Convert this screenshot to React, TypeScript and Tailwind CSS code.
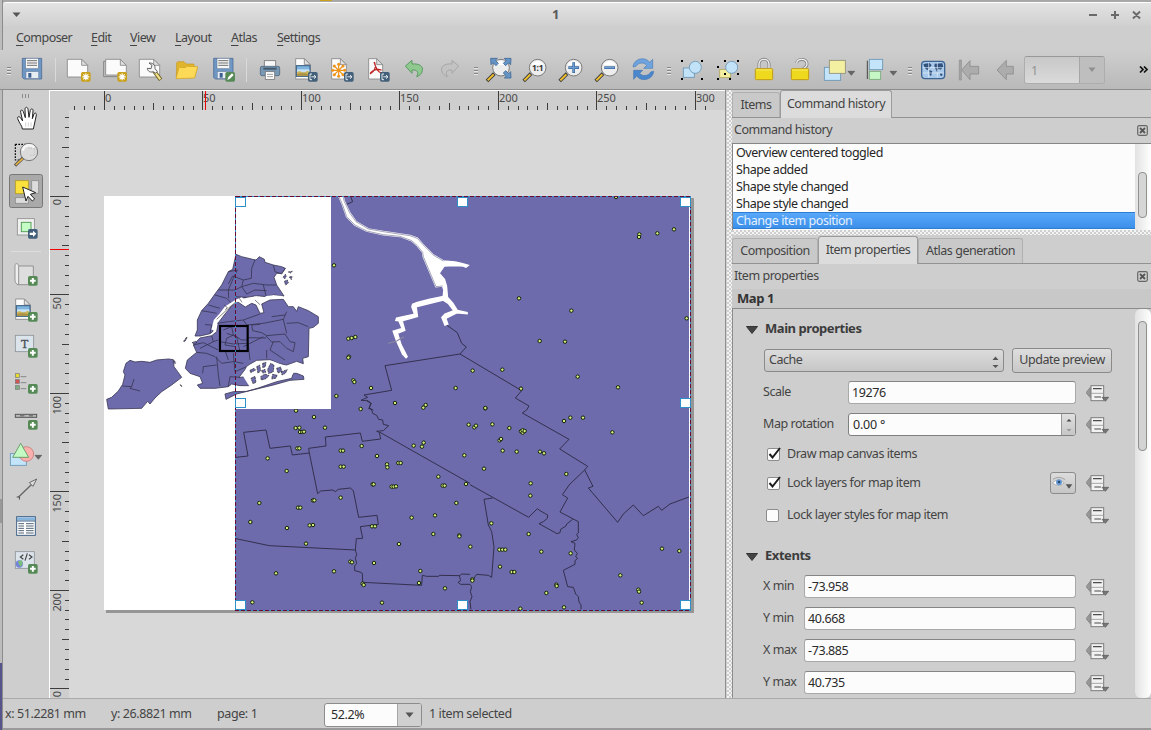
import React from "react";

type Pt = [number, number];

const FONT = "font-['Noto_Sans','Open_Sans',sans-serif]";

/* ---------- icon helpers ---------- */

function Ic({ x, y = 168, w = 36, h = 28, children }: { x: number; y?: number; w?: number; h?: number; children: React.ReactNode }) {
  return (
    <svg className="block shrink-0" width={w} height={h} viewBox={`${x} ${y} ${w * 3} ${h * 3}`}>
      {children}
    </svg>
  );
}

const Badge = ({ x, y, fill, children }: { x: number; y: number; fill: string; children: React.ReactNode }) => (
  <g transform={`translate(${x} ${y})`}>
    <rect width="29" height="29" rx="5" fill={fill} />
    {children}
  </g>
);
const PlusBadge = ({ x, y }: { x: number; y: number }) => (
  <Badge x={x} y={y} fill="#558a57">
    <path d="M14.500 6v17M6 14.500h17" stroke="#fff" strokeWidth="6" />
  </Badge>
);
const StarBadge = ({ x, y }: { x: number; y: number }) => (
  <Badge x={x} y={y} fill="#c9a21a">
    <path d="M14.500 4v21M4 14.500h21M7 7l15 15M22 7l-15 15" stroke="#fff" strokeWidth="3.500" />
  </Badge>
);
const ExportBadge = ({ x, y }: { x: number; y: number }) => (
  <Badge x={x} y={y} fill="#42607a">
    <path d="M12 6H6v17h6M10 14.500h13M18 9l6 5.500-6 5.500" stroke="#fff" strokeWidth="2.600" fill="none" />
  </Badge>
);
const Caret = ({ x, y }: { x: number; y: number }) => <path d={`M${x} ${y}h20l-10 12z`} fill="#666" stroke="#444" strokeWidth="1.500" />;

const Floppy = ({ x, y }: { x: number; y: number }) => (
  <g transform={`translate(${x} ${y})`}>
    <path d="M1 1h58v62H6l-5-5z" fill="#6f97c4" stroke="#4f6f98" strokeWidth="2.500" />
    <rect x="11" y="1" width="38" height="31" fill="#f6f6f6" stroke="#5b6f8a" strokeWidth="1.500" />
    <path d="M15 8h30M15 15h30M15 22h30" stroke="#555" strokeWidth="2.500" />
    <rect x="12" y="41" width="38" height="20" fill="#e8edf4" stroke="#6a7d96" strokeWidth="1.500" />
    <rect x="19" y="45" width="9" height="14" fill="#3b5f8e" />
  </g>
);

const Page = ({ x, y, w = 62, h = 54 }: { x: number; y: number; w?: number; h?: number }) => (
  <g transform={`translate(${x} ${y})`}>
    <path d={`M1 1H${w - 18}L${w} 19V${h}H1Z`} fill="#fbfbfb" stroke="#858585" strokeWidth="2.500" />
    <path d={`M${w - 18} 1V19H${w}Z`} fill="#dedede" stroke="#858585" strokeWidth="2.500" />
  </g>
);

const Picture = ({ x, y }: { x: number; y: number }) => (
  <g transform={`translate(${x} ${y})`}>
    <rect width="41" height="32" fill="#7db3df" stroke="#34577c" strokeWidth="3" />
    <path d="M2 11h37v9H2z" fill="#c9e3f2" />
    <path d="M2 19c10-7 16 3 22 1s8-7 15-2v12H2z" fill="#cdb25a" />
    <path d="M2 26c12-6 22-3 37 0v4H2z" fill="#ab9142" />
  </g>
);

const Lens = ({ x, y, children }: { x: number; y: number; children?: React.ReactNode }) => (
  <g transform={`translate(${x} ${y})`}>
    <path d="M-20 18L-42 40" stroke="#3b3b3b" strokeWidth="11" />
    <path d="M-22 20L-40 38" stroke="#f3c02c" strokeWidth="6" />
    <circle r="25" fill="#ededed" stroke="#7a7a7a" strokeWidth="3" />
    <path d="M-18 -8A20 20 0 0 1 18 -8" fill="#fff" />
    {children}
  </g>
);

const Lock = ({ x, open }: { x: number; open?: boolean }) => (
  <g transform={`translate(${x} 168)`}>
    {open ? (
      <path d="M17 21c2-15 31-15 31 4 0 10-10 9-11 15" fill="none" stroke="#858585" strokeWidth="9" />
    ) : (
      <path d="M12 40V25c0-20 30-20 30 0v15" fill="none" stroke="#858585" strokeWidth="9" />
    )}
    {open ? (
      <path d="M17 21c2-15 31-15 31 4 0 10-10 9-11 15" fill="none" stroke="#f0f0f0" strokeWidth="4" />
    ) : (
      <path d="M12 40V25c0-20 30-20 30 0v15" fill="none" stroke="#f0f0f0" strokeWidth="4" />
    )}
    <rect x="1" y="38" width="52" height="33" rx="3" fill="#efd91f" stroke="#c39b12" strokeWidth="3" />
    <path d="M4 42h46" stroke="#f8ec6b" strokeWidth="3" />
  </g>
);

function Grip({ w, x }: { w: number; x: number }) {
  return (
    <svg className="block shrink-0" width={w} height="28" viewBox={`0 0 ${w} 28`}>
      {[11, 14, 17].map((y) => (
        <g key={y}>
          <rect x={x} y={y} width="4" height="1" fill="#868686" />
          <rect x={x} y={y + 1} width="4" height="1" fill="#e6e6e6" />
        </g>
      ))}
    </svg>
  );
}
const Sep = () => (
  <div className="flex h-[24px] w-[11px] shrink-0 justify-center">
    <div className="w-px bg-[#dadada]" />
  </div>
);

/* ---------- main tool bar ---------- */

function Toolbar() {
  return (
    <div className="flex h-[38px] items-center pl-[3px]">
      <Grip w={11} x={4} />
      <Ic x={42}><Floppy x={66} y={174} /></Ic>
      <Sep />
      <Ic x={183}><Page x={201} y={177} /><StarBadge x={243} y={216} /></Ic>
      <Ic x={291}>
        <path d="M311 184h52v46h-52z" fill="#c4c4c4" stroke="#777" strokeWidth="2.500" />
        <Page x={316} y={177} w={63} h={48} /><StarBadge x={352} y={216} />
      </Ic>
      <Ic x={399}>
        <Page x={417} y={177} />
        <path d="M462 213l20 26" stroke="#6a5c20" strokeWidth="12" />
        <path d="M463 214l18 24" stroke="#f0e28c" strokeWidth="7" />
        <path d="M447 189l9 7-3 10-11-1c1 10 10 13 17 10l8 5 5-6-7-8c1-10-6-18-18-17z" fill="#f5f5f5" stroke="#444" strokeWidth="2.500" />
      </Ic>
      <Ic x={507}>
        <path d="M529 234l1-46 4-3h18l6 7h24v10l10 1-9 30z" fill="#e0b52e" stroke="#c8981c" strokeWidth="2" />
        <path d="M528 236l9-34 18 1 5-4 33 1-9 34z" fill="#fcd957" stroke="#d0a224" strokeWidth="2" />
      </Ic>
      <Ic x={615}>
        <Floppy x={640} y={174} />
        <Badge x={676} y={216} fill="#558a57"><path d="M6 24l3-9 11-11 5 5-11 11z" fill="#fff" /></Badge>
      </Ic>
      <Sep />
      <Ic x={756}>
        <rect x="793" y="182" width="34" height="25" fill="#f8f8f8" stroke="#777" strokeWidth="2.500" />
        <rect x="781" y="199" width="58" height="28" rx="5" fill="#7898b3" stroke="#50697f" strokeWidth="2.500" />
        <path d="M790 206h40" stroke="#45596c" strokeWidth="6" />
        <rect x="796" y="215" width="28" height="23" fill="#fff" stroke="#777" strokeWidth="2.500" />
        <path d="M801 223h18M801 230h18" stroke="#888" strokeWidth="2.500" />
      </Ic>
      <Ic x={864}><Page x={886} y={175} w={45} h={62} /><Picture x={889} y={197} /><ExportBadge x={924} y={216} /></Ic>
      <Ic x={972}>
        <Page x={994} y={175} w={45} h={62} />
        <path d="M1016 192v38M998 211h36M1003 198l26 26M1029 198l-26 26" stroke="#ee9418" strokeWidth="3.500" />
        {[[1016, 193], [1016, 229], [998, 211], [1034, 211], [1003, 198], [1029, 224], [1029, 198], [1003, 224]].map(([a, b]) => (
          <circle key={`${a}-${b}`} cx={a} cy={b} r="4.500" fill="#ee9418" />
        ))}
        <ExportBadge x={1032} y={216} />
      </Ic>
      <Ic x={1080}>
        <Page x={1105} y={175} w={43} h={62} />
        <path d="M1122 186c8 24 12 29 24 34M1124 187c6 16-3 28-14 35M1111 219c10-11 25-13 34-8" stroke="#bd2525" strokeWidth="3.500" fill="none" />
        <ExportBadge x={1140} y={216} />
      </Ic>
      <Ic x={36} y={18}>
        <path d="M64 48l20-17v11c22-2 34 7 31 20-2 10-8 15-17 18 7-13 3-21-14-20v10z" fill="#8fc98f" stroke="#5a9a61" strokeWidth="3" />
      </Ic>
      <Ic x={144} y={18}>
        <path d="M224 48l-20-17v11c-22-2-34 7-31 20 2 10 8 15 17 18-7-13-3-21 14-20v10z" fill="#c3c3c3" stroke="#a6a6a6" strokeWidth="3" />
      </Ic>
      <Grip w={14} x={6} />
      <Ic x={294} y={18}>
        <Lens x={351} y={53} />
        {["M320 25h20l-6 6 9 9-7 7-9-9-6 6z", "M381 25h-20l6 6-9 9 7 7 9-9 6 6z", "M381 84h-20l6-6-9-9 7-7 9 9 6-6z"].map((d) => (
          <path key={d} d={d} fill="#6594c6" stroke="#416a96" strokeWidth="2.500" />
        ))}
      </Ic>
      <Ic x={402} y={18}>
        <Lens x={461} y={53}>
          <text x="0" y="9" textAnchor="middle" className="font-['Open_Sans',sans-serif] font-bold" fontSize="25" fill="#333">1:1</text>
        </Lens>
      </Ic>
      <Ic x={510} y={18}><Lens x={569} y={53}><path d="M0-16V16M-16 0H16" stroke="#3a6ba2" strokeWidth="8" /><path d="M0-14V14M-14 0H14" stroke="#6d9bd0" strokeWidth="4" /></Lens></Ic>
      <Ic x={618} y={18}><Lens x={677} y={53}><path d="M-16 0H16" stroke="#3a6ba2" strokeWidth="8" /><path d="M-14 0H14" stroke="#6d9bd0" strokeWidth="4" /></Lens></Ic>
      <Ic x={726} y={18}>
        <path d="M747 51c2-26 37-33 50-14l9-9v27h-27l9-9c-9-11-26-8-32 3z" fill="#6fa3dd" stroke="#4a7db8" strokeWidth="2" />
        <path d="M809 64c-2 26-37 33-51 14l-9 10V61h27l-9 9c9 11 27 8 33-4z" fill="#4b87cc" stroke="#4277b2" strokeWidth="2" />
      </Ic>
      <Grip w={12} x={5} />
      <Ic x={870} y={18}>
        <rect x="898" y="54" width="33" height="28" fill="#c2e2f8" stroke="#6894b4" strokeWidth="2.500" />
        <circle cx="934" cy="52" r="18" fill="#c2e2f8" stroke="#6894b4" strokeWidth="2.500" />
        {[[891, 30], [951, 30], [891, 84], [951, 84]].map(([a, b]) => <rect key={`${a}-${b}`} x={a} y={b} width="6" height="6" />)}
      </Ic>
      <Ic x={978} y={18}>
        <rect x="1007" y="58" width="33" height="25" fill="#f3eda2" stroke="#ada65d" strokeWidth="2.500" />
        <circle cx="1043" cy="52" r="18" fill="#c2e2f8" stroke="#6894b4" strokeWidth="2.500" />
        {[[1020, 30], [1059, 30], [999, 48], [1059, 69], [1020, 69], [999, 84], [1035, 84]].map(([a, b]) => <rect key={`${a}-${b}`} x={a} y={b} width="6" height="6" />)}
      </Ic>
      <Ic x={-63}><Lock x={-36} /></Ic>
      <Ic x={45}><Lock x={72} open /></Ic>
      <Ic x={153} w={42}>
        <rect x="172" y="202" width="49" height="39" fill="#c4e4fa" stroke="#6894b4" strokeWidth="2.500" />
        <rect x="187" y="181" width="48" height="39" fill="#f3f0a2" stroke="#8d8d78" strokeWidth="2.500" />
        <Caret x={243} y={214} />
      </Ic>
      <Ic x={279} w={42}>
        <path d="M301 182v55" stroke="#444" strokeWidth="3" />
        <rect x="307" y="178" width="40" height="31" fill="#c4e4fa" stroke="#6894b4" strokeWidth="2.500" />
        <rect x="307" y="214" width="34" height="24" fill="#c6f8c5" stroke="#7aa67a" strokeWidth="2.500" />
        <Caret x={369} y={214} />
      </Ic>
      <Grip w={15} x={6} />
      <Ic x={450} w={34}>
        <rect x="464" y="184" width="69" height="52" rx="10" fill="#a9c9ea" stroke="#3e6492" strokeWidth="4" />
        <path d="M469 192l19-3 6 7-9 10-4 5-8-8zM487 210l9 4-4 15-5-6zM503 191l23-1 3 10-8 9-7-3-3 13-5-11-4-9zM520 219l7 2-2 7-6-2z" fill="#31527d" />
        <path d="M485 187v46M511 187v46M467 203h63M467 219h63" stroke="#e4effa" strokeWidth="2" />
      </Ic>
      <Ic x={552}>
        <path d="M577 180h6v60h-6z" fill="#a6a6a6" stroke="#8d8d8d" strokeWidth="2" />
        <path d="M584 210l25-28v17h26v23h-26v17z" fill="#acacac" stroke="#8d8d8d" strokeWidth="2.500" />
      </Ic>
      <Ic x={660}><path d="M690 210l28-29v18h21v23h-21v17z" fill="#acacac" stroke="#8d8d8d" strokeWidth="2.500" /></Ic>
      <div className="ml-px flex h-[28px] w-[81px] overflow-hidden rounded-[3px] border border-[#adadad] border-t-[#989898]">
        <div className="w-[54px] bg-gradient-to-b from-[#c8c8c8] to-[#dadada] pl-[6px] leading-[27px] text-[#929292]">1</div>
        <div className="flex flex-1 items-center justify-center border-l border-[#a6a6a6] bg-[#bebebe]">
          <svg width="8" height="6" viewBox="0 0 8 6"><path d="M.5.500h7L4 5z" fill="#8f8f8f" /></svg>
        </div>
      </div>
      <svg className="ml-[34px] block" width="10" height="8" viewBox="0 0 10 8"><path d="M1 .500l3 3-3 3M5 .500l3 3-3 3" fill="none" stroke="#111" strokeWidth="1.700" /></svg>
    </div>
  );
}

/* ---------- side tool bar ---------- */

const S = ({ y, h = 36, children }: { y: number; h?: number; children: React.ReactNode }) => <Ic x={9} y={y} w={46} h={h}>{children}</Ic>;

function SideTools() {
  return (
    <div className="flex w-[46px] shrink-0 flex-col">
      <S y={15} h={11}>{[66, 75, 84].map((x) => <rect key={x} x={x} y="27" width="3" height="12" fill="#8b8b8b" />)}</S>
      <S y={48}>
        <path d="M67 132c0-9-8-15-14-31-2-7 5-8 9-2l6 9-6-26c-2-8 5-9 8-2l6 18-1-25c0-8 8-8 9 0l3 24 4-21c2-7 9-5 8 2l-2 23 5-14c3-5 8-3 7 3l-5 24-4 18z" fill="#fff" stroke="#222" strokeWidth="3" />
        <path d="M77 112v13M85 112v13M93 112v13" stroke="#bbb" strokeWidth="2" />
      </S>
      <S y={156}>
        <path d="M46 178h45M46 178v47h20" fill="none" stroke="#000" strokeWidth="3.500" strokeDasharray="5 4" />
        <path d="M70 218L45 242" stroke="#555" strokeWidth="10" /><path d="M68 221L47 240" stroke="#e9b33c" strokeWidth="5" />
        <circle cx="87" cy="201" r="26" fill="#dcdcdc" fillOpacity=".93" stroke="#777" strokeWidth="3" />
        <path d="M68 197a20 20 0 0 1 35-9" stroke="#f7f7f7" strokeWidth="8" fill="none" />
        <path d="M86 190h18v21h-16" stroke="#aaa" strokeWidth="2" strokeDasharray="3 4" fill="none" />
      </S>
      <S y={264}>
        <rect x="28.500" y="268.500" width="99" height="99" rx="6" fill="#a9a9a9" stroke="#777" strokeWidth="3" />
        <rect x="46" y="287" width="39" height="39" fill="#fbe13d" stroke="#b29a27" strokeWidth="2.500" />
        <rect x="95" y="287" width="21" height="38" fill="#dcdcdc" stroke="#8d8d8d" strokeWidth="2.500" />
        <rect x="46" y="338" width="39" height="17" fill="#dcdcdc" stroke="#8d8d8d" strokeWidth="2.500" />
        <path d="M68 306l39 17-16 5 13 14-7 6-13-14-6 14z" fill="#fff" stroke="#222" strokeWidth="3" />
      </S>
      <S y={372} h={37}>
        <rect x="52" y="401" width="51" height="49" fill="#f1f1f1" stroke="#8d8d8d" strokeWidth="2.500" />
        <rect x="64" y="412" width="29" height="28" fill="#c5fbc4" stroke="#58a058" strokeWidth="3" />
        <Badge x={84} y={432} fill="#42607a"><path d="M5 11h10V5l10 9.500L15 24v-6H5z" fill="#fff" /></Badge>
      </S>
      <div className="flex h-[10px] items-center justify-center"><div className="h-px w-[30px] bg-[#dedede]" /></div>
      <S y={513}>
        <path d="M54 543h46v56H54z" fill="#dedede" stroke="#858585" strokeWidth="2.500" />
        <path d="M45 539c5-6 11-2 11 5v55c-7 0-11-7-11-14z" fill="#efefef" stroke="#858585" strokeWidth="2.500" />
        <PlusBadge x={84} y={573} />
      </S>
      <S y={621}><Page x={46} y={641} w={45} h={62} /><Picture x={49} y={662} /><PlusBadge x={84} y={681} /></S>
      <S y={729} h={37}>
        <rect x="46" y="751" width="55" height="49" fill="#dbe3eb" stroke="#8d9299" strokeWidth="2.500" />
        <text x="74" y="788" textAnchor="middle" fontSize="36" className="font-['Liberation_Serif',serif]" fill="#4a5058" stroke="#4a5058">T</text>
        <PlusBadge x={84} y={789} />
      </S>
      <S y={840}>
        {[["#e6da2e", 866], ["#d35454", 884], ["#7fae80", 902]].map(([c, y]) => (
          <g key={y}><rect x="46" y={y} width="12" height="11" fill={c as string} stroke="#777" strokeWidth="2" /><path d={`M62 ${Number(y) + 9}h17`} stroke="#888" strokeWidth="3" /></g>
        ))}
        <PlusBadge x={84} y={897} />
      </S>
      <S y={33}>
        <rect x="46" y="73" width="64" height="9" fill="#b9b9b9" stroke="#555" strokeWidth="3" />
        <path d="M60 77h13M87 77h12" stroke="#777" strokeWidth="5" />
        <PlusBadge x={84} y={90} />
      </S>
      <S y={141}>
        <rect x="31" y="191" width="48" height="35" fill="#c4e4fa" stroke="#6894b4" strokeWidth="2.500" />
        <circle cx="79" cy="192" r="22" fill="#fbb0ae" stroke="#c57b7a" strokeWidth="2.500" />
        <path d="M62 160l24 42H38z" fill="#c4fbc4" stroke="#589058" strokeWidth="2.500" />
        <Caret x={105} y={196} />
      </S>
      <S y={249} h={35}>
        <path d="M55 322l42-41" stroke="#666" strokeWidth="4" />
        <path d="M110 267l-22 11 11 11z" fill="#ddd" stroke="#555" strokeWidth="2.500" />
        <path d="M50 321h9l-1 8" stroke="#555" strokeWidth="3" fill="none" />
      </S>
      <S y={354}>
        <rect x="50" y="380" width="56" height="56" fill="#fff" stroke="#3c6084" strokeWidth="3" />
        <path d="M51 386.500h54" stroke="#86b4dc" strokeWidth="9" /><path d="M51 393h54" stroke="#3c6084" strokeWidth="3" />
        {[401, 408, 415, 422, 429].map((y) => <path key={y} d={`M55 ${y}h17M78 ${y}h23`} stroke="#46586b" strokeWidth="2.800" />)}
      </S>
      <S y={462}>
        <rect x="46" y="485" width="57" height="50" fill="#dbe3eb" stroke="#8d9299" strokeWidth="2.500" />
        <circle cx="58" cy="522" r="11" fill="#7585d6" /><path d="M54 514l12-3 2 10-6 10-5-8z" fill="#79bf7c" />
        <path d="M70 494l-9 7 9 7M87 494l9 7-9 7M82 490l-7 22" fill="none" stroke="#444" strokeWidth="3.500" />
        <PlusBadge x={84} y={522} />
      </S>
    </div>
  );
}

/* ---------- rulers ---------- */

const MM = 1.9695;
const steps = (from: number, to: number) => Array.from({ length: (to - from) / 5 + 1 }, (_, i) => from + i * 5);

function TopRuler() {
  return (
    <svg className="block tracking-[-0.1px]" width="675" height="19" viewBox="50 91 675 19" shapeRendering="crispEdges">
      {steps(-15, 305).map((v) => {
        const x = Math.round(104 + v * MM);
        const major = v % 50 === 0;
        const top = major ? 91 : v % 25 === 0 ? 103 : 106;
        return (
          <g key={v}>
            <rect x={x} y={top} width="1" height={110 - top} fill="#3c3c3c" />
            {major && <text x={x + 1} y="102" fontSize="11" fill="#4a4a4a">{v}</text>}
          </g>
        );
      })}
      <rect x="205" y="91" width="1" height="19" fill="#f00000" />
    </svg>
  );
}
function LeftRuler() {
  return (
    <svg className="block shrink-0 tracking-[-0.1px]" width="19" height="588" viewBox="50 110 19 588" shapeRendering="crispEdges">
      {steps(-40, 250).map((v) => {
        const y = Math.round(196 + v * MM);
        const major = v % 50 === 0;
        const left = major ? 50 : v % 25 === 0 ? 62 : 65;
        return (
          <g key={v}>
            <rect x={left} y={y} width={69 - left} height="1" fill="#3c3c3c" />
            {major && <text transform={`translate(61 ${y + 3}) rotate(-90)`} textAnchor="end" fontSize="11" fill="#4a4a4a">{v}</text>}
          </g>
        );
      })}
      <rect x="50" y="249" width="19" height="1" fill="#f00000" />
    </svg>
  );
}

/* ---------- map ---------- */

const northPts: Pt[] = [[12,226],[858,21],[928,133],[927,141],[982,130],[1032,118],[567,325],[724,362],[1070,385],[629,453],[705,455],[55,446],[65,444],[76,441],[57,500],[55,503],[70,571],[73,576],[123,594],[19,618],[195,639],[280,653],[287,645],[428,542],[517,539],[377,594],[573,596],[743,560],[864,592],[92,657],[466,655]];
const westPts: Pt[] = [[198,32],[252,51],[285,83],[197,84],[208,83],[210,96],[217,96],[222,95],[202,145],[208,145],[113,175],[170,213],[88,309],[61,366],[171,384],[204,323],[211,323],[249,301],[253,301],[239,376],[249,375],[228,431],[138,520],[312,514],[67,607],[332,152],[339,152],[332,200],[341,200],[332,293],[395,138],[441,168],[471,193],[472,202],[505,189],[512,189],[428,253],[431,253],[485,260],[491,260],[498,259],[551,137],[576,140],[581,128],[625,230],[638,257],[644,257],[703,166],[679,309],[545,353],[615,346],[610,402],[688,406],[688,409],[426,379],[435,379],[507,432],[432,489],[361,485],[366,487],[398,551],[401,555],[571,513],[567,549],[645,565],[456,608]];
const eastPts: Pt[] = [[76,24],[26,74],[43,82],[48,77],[97,73],[148,84],[183,94],[188,98],[188,91],[194,93],[119,121],[123,117],[128,152],[170,155],[240,155],[252,160],[312,63],[331,53],[369,53],[457,97],[72,206],[319,222],[212,250],[211,287],[18,252],[94,370],[206,402],[31,440],[118,449],[127,449],[136,449],[244,455],[332,460],[120,500],[155,516],[163,516],[37,538],[37,542],[289,554],[290,558],[259,579],[312,622],[181,626],[606,446],[658,453],[481,526],[535,569],[537,575],[545,608]];

const Dots = ({ pts }: { pts: Pt[] }) => (
  <>
    {pts.map(([x, y], i) => (
      <circle key={i} cx={x} cy={y} r="5.200" fill="#cdf07c" stroke="#16200c" strokeWidth="3" />
    ))}
  </>
);

const landmass = [
  "M20 628L35 622L55 603L68 583L75 555L70 545L78 520L90 511L105 516L125 514L150 517L170 510L205 507L220 509L222 530L233 545L245 562L215 585L185 605L165 624L150 642L143 634L125 655L25 657Z",
  "M408 193L425 200L458 208L468 210L478 200L493 208L495 217L520 225L545 230L556 235L545 250L530 250L522 262L530 285L540 300L552 318L520 315L500 320L470 317L440 322L412 328L408 334L385 350L360 375L345 392L338 425L330 431L300 438L285 438L292 420L292 390L305 362L325 340L345 312L365 285L385 245L398 238Z",
  "M412 335L436 351L455 340L468 345L480 370L492 368L485 342L510 330L550 328L565 350L580 350L590 364L595 350L625 362L655 380L655 400L640 412L627 415L625 500L608 505L610 521L590 514L560 525L535 520L510 509L470 511L445 525L430 545L417 562L445 560L447 587L420 587L395 582L385 590L345 595L300 595L292 585L308 580L300 560L270 550L256 535L262 510L290 487L280 465L300 444L335 437L350 425L355 398L375 372L400 342Z",
  "M375 612L400 605L440 604L475 594L530 575L575 565L580 550L590 550L610 558L612 568L570 571L520 585L450 602L410 612L378 628Z",
];
const bay = "M430 560L440 530L475 517L515 512L540 522L560 530L572 530L580 552L555 562L520 574L475 586L447 587Z";
const islets = ["M450 541l12-6 5 5-15 8z", "M470 530l9-5 3 17-8 8z", "M488 520l10-3-2 13-8 3z", "M503 538l9-18 10 5-2 20-14 6z", "M530 535l12-4 3 13-11 5z", "M453 565l12-6 3 18-9 4z", "M482 560l13-8 12 5-9 9-14 4z", "M518 553l14 3-5 9-12 2z", "M544 545l18-6-6 11-10 5z", "M485 542l10-4 2 9-9 2z", "M549 262l7-9 3 5-4 8z", "M565 246l12-2-5 5z", "M553 274l9-4 3 9-8 6z", "M568 261l8-2-2 10z", "M276 458l10-4 5 3-8 5z", "M251 454l9-13 1 3-7 11z", "M222 511l5 7-2 3-5-6z", "M240 584l5 3v3z"];
const districts = [
  "M465 210L455 235L454 265L430 270L398 258L385 282",
  "M520 225L525 245L545 252L556 235M430 270L425 290L460 280L500 285L528 285M425 290L440 312L465 300L500 302M490 285L498 318",
  "M385 245L412 240L400 265L385 300L386 325M355 300L405 300L425 290M345 315L380 325L395 340M325 345L360 355M305 362L350 370M315 404L335 405L330 430M405 320L440 322",
  "M352 400L385 395L430 390L480 372M430 390L440 405L490 400L550 388L560 365M480 403L455 405L458 422L485 428L500 437L555 432L570 455L585 458L580 485L560 475L540 455L515 456L498 438",
  "M550 388L560 430M560 400L595 398L625 410M440 443L498 444M430 470L490 440M520 455L510 480L555 510M515 380L555 375",
  "M290 487L320 490L345 500L365 520L400 515L430 520M280 465L310 458L355 480M335 437L340 455L355 450M360 455L400 462L440 460M380 430L410 440L420 485M350 500L355 555L360 588M308 550L310 530L350 525M385 590L390 560L420 562M400 490L405 545L440 530M340 455L300 475M375 480L385 510M445 465L450 510M500 480L500 505",
  "M68 588L95 590L90 595L120 603M95 590L102 567",
  "M370 420L395 410L400 435L380 445L375 465L405 470M400 435L425 450L440 450",
];
const boundaries = [
  ["330 190", "M350 405L382 428L395 460L409 471L390 492L165 527L185 601L102 615L113 622L93 631L110 632L122 640L118 655L130 660M390 492L575 602L556 624L597 648L590 660M50 43L68 35L62 20"],
  ["230 400", "M18 172L54 168L41 97L108 90L120 145L181 138L187 165L238 159L236 145L288 138L286 111L391 99L397 124L452 117L448 97L440 94L460 92L476 77L460 73L458 60L446 58L440 46L428 40L424 27L416 26L424 10L410 0M450 97L720 250M238 159L263 281L272 273L308 270L316 275L325 268L361 264L370 272L386 352L441 346L445 373L391 380L398 415L379 416L376 450L118 437L18 416M376 450L380 464L376 475L380 490L374 498L374 512L390 516L397 520L398 547L575 556L577 526L590 529L625 529L630 526L690 527L694 522L720 523M688 527L692 542L684 547L692 553L720 553"],
  ["460 400", "M200 30L187 39L327 118L299 147L383 199L374 210L330 252L307 284L323 294L300 336L355 365L355 398L350 404L355 413L350 420L333 425L345 430L343 450L352 460L347 470L353 475L345 482L345 493L310 511L323 560L340 562L347 582L355 590L357 606L363 615L363 628M374 210L399 259L385 264L473 367L490 342L520 315L550 347L595 319L605 331L630 312L687 291M30 254L206 352L232 326L240 332L263 345L262 355L250 365L237 371L291 401L300 398L302 388L318 378L320 372L338 358M98 294L72 298L76 320L85 375L95 395L102 440L95 532L85 526L50 523L45 530L38 545M30 553L35 560L31 575L36 590L30 605L33 628"],
];

function MapCanvas() {
  return (
    <svg className="block bg-[#d8d8d8]" width="656" height="588" viewBox="69 110 656 588">
      <clipPath id="frame"><rect x="235" y="196" width="455" height="414" /></clipPath>
      <rect x="106" y="198" width="588" height="415" fill="#969696" />
      <rect x="104" y="196" width="587" height="414" fill="#fff" />
      <rect x="235" y="196" width="454" height="414" fill="#6d6bab" />
      <g clipPath="url(#frame)">
        <g fill="none" stroke="#2e2b47" strokeWidth="2.800" strokeLinejoin="round">
          {boundaries.map(([at, d]) => <path key={at} transform={`translate(${at}) scale(.33333)`} d={d} />)}
        </g>
        <g transform="translate(330 190) scale(.33333)">
          <path d="M25 15L38 45L50 80L75 105L110 123L160 134L210 139L245 152L262 167L278 187L280 200L318 290L338 288L342 300L340 320L300 328L262 338L248 343L246 351L254 373L200 385L198 391L207 392L217 416L190 424L200 452L218 492L228 503L231 500L213 465L202 430L224 421L216 392L262 379L258 350L340 330L355 340L372 362L345 373L336 382L345 405L353 402L347 385L380 368L411 371L411 368L382 362L368 340L352 322L349 288L343 268L327 250L342 228L375 226L400 228L408 231L414 226L395 221L375 216L340 213L310 195L280 165L262 145L240 137L160 125L115 117L78 95L60 70L43 35L38 15Z" fill="#fff" stroke="#fff" strokeWidth="5" />
          <path d="M25 15L38 45L50 80L75 105L110 123L160 134L210 139L245 152L262 167L278 187L280 200L318 290L338 288M340 213L310 195L280 165L262 145L240 137L160 125L115 117L78 95L60 70L43 35L38 15" fill="none" stroke="#4a486f" strokeWidth="1.500" />
          <path d="M175 460L200 453L222 440" fill="none" stroke="#8a889f" strokeWidth="3.500" />
          <Dots pts={northPts} />
        </g>
        <g transform="translate(230 400) scale(.33333)"><Dots pts={westPts} /></g>
        <g transform="translate(460 400) scale(.33333)"><Dots pts={eastPts} /></g>
      </g>
      <rect x="104" y="196" width="227" height="213" fill="#fff" />
      <g transform="translate(100 190) scale(.33333)" strokeLinejoin="round">
        <g fill="#6d6bab" stroke="#3c3a58" strokeWidth="2.500">
          {landmass.map((d) => <path key={d} d={d} />)}
        </g>
        <path d={bay} fill="#fff" />
        <g fill="#6d6bab" stroke="#222" strokeWidth="2" strokeDasharray="6 2">{islets.map((d) => <path key={d} d={d} />)}</g>
        <g fill="none" stroke="#35334f" strokeWidth="2.400">{districts.map((d) => <path key={d} d={d} />)}</g>
        <path d="M338 420L345 392L362 373L378 352L410 332L425 326L440 340M462 322L484 335L500 322L520 320L548 322" fill="none" stroke="#fff" strokeWidth="8" />
        <path d="M350 388L385 355L405 338M372 345l10 8-6 6M418 325l8 12M465 330l15 14" fill="none" stroke="#444" strokeWidth="2" />
        <rect x="360" y="408" width="83" height="75" fill="none" stroke="#000" strokeWidth="6.500" strokeLinejoin="miter" />
      </g>
      <g fill="none" shapeRendering="crispEdges">
        <rect x="235.500" y="196.500" width="455" height="413.500" stroke="#2e8fc9" />
        <rect x="235.500" y="196.500" width="455" height="413.500" stroke="#640a35" strokeDasharray="4 2" />
      </g>
      {[[235, 197], [457, 197], [680, 197], [235, 398], [680, 398], [235, 600], [457, 600], [680, 600]].map(([x, y]) => (
        <rect key={`${x}-${y}`} x={x + 0.5} y={y + 0.5} width="10" height="9" fill="#fff" stroke="#2e8fc9" />
      ))}
    </svg>
  );
}

/* ---------- right-hand dock ---------- */

const STIPPLE = "bg-[repeating-conic-gradient(#f4f4f4_0_25%,transparent_0_50%)] bg-[length:4px_4px]";

function Tab({ active, w, children }: { active?: boolean; w: string; children: React.ReactNode }) {
  return (
    <div className={`${w} flex shrink-0 justify-center rounded-t-[3px] border border-b-0 leading-[20px] ${active ? "z-10 h-[28px] border-[#9b9b9b] bg-[#dcdcdc] pt-[3px]" : "h-[25px] border-[#b0b0b0] bg-[#c9c9c9] pt-[2px]"}`}>
      {children}
    </div>
  );
}
function DockTitle({ h, children }: { h: string; children: React.ReactNode }) {
  return (
    <div className={`${h} flex items-center justify-between pl-[2px] pr-[3px]`}>
      <span>{children}</span>
      <svg width="11" height="11" viewBox="0 0 11 11"><rect x=".7" y=".7" width="9.600" height="9.600" rx="1.500" fill="none" stroke="#666" strokeWidth="1.200" /><path d="M3 3l5 5M8 3l-5 5" stroke="#555" strokeWidth="1.800" /></svg>
    </div>
  );
}
const Dd = () => (
  <svg className="-mr-px ml-[10px] mt-[1px] block shrink-0" width="24" height="19" viewBox="1084 252 72 57">
    <path d="M1084 278l13-16v31z" fill="#999" stroke="#777" strokeWidth="2" />
    <rect x="1099" y="257" width="38" height="45" fill="#f2f2f2" stroke="#7d7d7d" strokeWidth="3" />
    <path d="M1105 266h26M1109 291h20" stroke="#4b4b4b" strokeWidth="3.500" /><path d="M1099 280h38" stroke="#999" strokeWidth="2.500" />
    <path d="M1132 292h20l-10 12z" fill="#777" stroke="#555" strokeWidth="2" />
  </svg>
);
const Gutter = () => <div className="w-[26px] shrink-0" />;
const Field = ({ children }: { children: React.ReactNode }) => (
  <div className="h-[23px] flex-1 rounded-[3px] border border-[#a9a9a9] border-t-[#858585] bg-[#fcfcfc] pl-[3px] leading-[21px] tracking-[-0.4px] text-[#2b2b2b]">{children}</div>
);
const Check = ({ on }: { on?: boolean }) => (
  <svg className="ml-[2px] mr-[5px] block shrink-0" width="17" height="15" viewBox="0 0 17 15">
    <rect x="2.500" y="1.500" width="12" height="12" rx="1.500" fill="#fcfcfc" stroke="#8c8c8c" />
    {on && <path d="M4.500 7l3 3.500 7.500-9.500" fill="none" stroke="#1d1d1d" strokeWidth="2" />}
  </svg>
);
const Heading = ({ children }: { children: React.ReactNode }) => (
  <div className="flex h-[20px] items-center pl-[13px] text-[13px] font-bold tracking-[-0.45px] text-[#3c3c3c]">
    <svg className="mr-[7px] mt-[2px] block" width="12" height="8" viewBox="0 0 12 8"><path d="M.5.500h11L6 7.500z" fill="#444" stroke="#333" /></svg>
    {children}
  </div>
);

function RightDock() {
  return (
    <div className="flex min-w-0 flex-1 border-l border-[#8f8f8f]">
      <div className={`ml-px w-[5px] shrink-0 ${STIPPLE}`} />
      <div className="flex min-w-0 flex-1 flex-col">
        <div className="flex h-[28px] items-end border-b border-[#929292]">
          <Tab w="w-[48px]">Items</Tab>
          <div className="-mb-px"><Tab active w="w-[112px]">Command history</Tab></div>
        </div>
        <DockTitle h="h-[25px]">Command history</DockTitle>
        <div className="flex h-[87px] border-l border-t border-[#868686] bg-[#fcfcfc]">
          <div className="flex-1 leading-[17px] text-[#262626]">
            {["Overview centered toggled", "Shape added", "Shape style changed", "Shape style changed"].map((t, i) => (
              <div key={i} className="h-[17px] pl-[3px]">{t}</div>
            ))}
            <div className="h-[17px] border-y border-[#2d7ed0] bg-gradient-to-b from-[#58a8fb] to-[#3c8fe9] pl-[3px] leading-[15px] text-[#e6f1fd]">Change item position</div>
          </div>
          <div className="w-[16px] bg-gradient-to-r from-[#e2e2e2] to-[#fff] pl-[3px] pt-[28px]">
            <div className="h-[46px] w-[9px] rounded-[4px] border border-[#909090] bg-[#d6d6d6]" />
          </div>
        </div>
        <div className={`h-[5px] shrink-0 ${STIPPLE}`} />
        <div className="mt-px flex h-[28px] items-end border-b border-[#929292]">
          <Tab w="w-[86px]">Composition</Tab>
          <div className="-mb-px"><Tab active w="w-[100px]">Item properties</Tab></div>
          <Tab w="w-[105px]">Atlas generation</Tab>
        </div>
        <DockTitle h="h-[25px]">Item properties</DockTitle>
        <div className="h-[19px] bg-[#c8c8c8] pl-[5px] text-[13px] font-bold leading-[18px] tracking-[-0.4px] text-[#333]">Map 1</div>
        <div className="flex min-h-0 flex-1 overflow-hidden border-l border-t border-[#8c8c8c]">
          <div className="flex min-w-0 flex-1 flex-col">
            <div className="mt-[10px]"><Heading>Main properties</Heading></div>
            <div className="mt-[9px] flex h-[25px] items-center pl-[31px]">
              <div className="flex h-[23px] w-[240px] items-center justify-between rounded-[3px] border border-[#8a8a8a] bg-gradient-to-b from-[#dcdcdc] to-[#c6c6c6] pl-[4px] pr-[4px]">
                Cache
                <svg className="mt-[3px]" width="7" height="13" viewBox="0 0 7 13"><path d="M.5 4h6L3.500.500zM.5 9h6L3.500 12z" fill="#555" /></svg>
              </div>
              <div className="ml-[8px] flex h-[25px] w-[100px] items-center justify-center rounded-[3px] border border-[#8a8a8a] bg-gradient-to-b from-[#dedede] to-[#c8c8c8]">Update preview</div>
            </div>
            <div className="mt-[8px] flex h-[23px] items-center pl-[30px]"><span className="w-[85px]">Scale</span><Field>19276</Field><Dd /><Gutter /></div>
            <div className="mt-[9px] flex h-[23px] items-center pl-[30px]">
              <span className="w-[85px]">Map rotation</span>
              <div className="flex h-[23px] flex-1 overflow-hidden rounded-[3px] border border-[#808080] bg-[#fcfcfc]">
                <div className="flex-1 pl-[4px] leading-[21px] tracking-[-0.2px] text-[#2b2b2b]">0.00 °</div>
                <div className="flex w-[14px] items-center justify-center border-l border-[#999] bg-gradient-to-b from-[#e0e0e0] to-[#c6c6c6]">
                  <svg width="6" height="14" viewBox="0 0 6 14"><path d="M.5 3.500h5L3 1z" fill="#444" /><path d="M.5 11h5L3 13.500z" fill="#999" /></svg>
                </div>
              </div>
              <Dd /><Gutter />
            </div>
            <div className="mt-[8px] flex h-[20px] items-center pl-[30px]"><Check on />Draw map canvas items</div>
            <div className="mt-[8px] flex h-[22px] items-center pl-[30px]">
              <Check on /><span className="flex-1">Lock layers for map item</span>
              <div className="flex h-[22px] w-[26px] items-center justify-center rounded-[3px] border border-[#8c8c8c] bg-gradient-to-b from-[#dcdcdc] to-[#c6c6c6]">
                <svg width="22" height="16" viewBox="980 526 66 48">
                  <path d="M981 550q18-18 36 0q-18 14-36 0z" fill="#fafafa" stroke="#999" strokeWidth="2" /><path d="M983 539q18-12 36 1" fill="none" stroke="#999" strokeWidth="2.500" />
                  <circle cx="1001" cy="548" r="9" fill="#6a9bd2" /><circle cx="1001" cy="547" r="4" fill="#244a7a" /><path d="M1021 554h20l-10 13z" fill="#555" />
                </svg>
              </div>
              <Dd /><Gutter />
            </div>
            <div className="mt-[10px] flex h-[22px] items-center pl-[29px]"><Check /><span className="ml-px flex-1">Lock layer styles for map item</span><Dd /><Gutter /></div>
            <div className="mt-[20px]"><Heading>Extents</Heading></div>
            {[["X min", "-73.958"], ["Y min", "40.668"], ["X max", "-73.885"], ["Y max", "40.735"]].map(([k, v]) => (
              <div key={k} className="mt-[9px] flex h-[23px] shrink-0 items-center pl-[30px]"><span className="w-[41px]">{k}</span><Field>{v}</Field><Dd /><Gutter /></div>
            ))}
          </div>
          <div className="w-[16px] rounded-b-[6px] rounded-t-[6px] bg-gradient-to-r from-[#e2e2e2] to-[#fff] pl-[3px] pt-[12px]">
            <div className="h-[130px] w-[9px] rounded-[4px] border border-[#909090] bg-[#d3d3d3]" />
          </div>
        </div>
      </div>
    </div>
  );
}

/* ---------- window ---------- */

function MenuItem({ w, children }: { w: string; children: string }) {
  return <div className={w}><span className="underline underline-offset-[3px]">{children[0]}</span>{children.slice(1)}</div>;
}

export default function App() {
  return (
    <div className={`${FONT} flex h-[730px] w-[1151px] overflow-hidden bg-[#cecece] text-[12.5px] tracking-[-0.46px] text-[#444]`}>
      <div className="flex w-[3px] shrink-0 flex-col border-r border-[#8c8c8c] bg-[#bcbcbc] pt-[55px]">
        <div className="h-[28px] bg-[#2e63a5]" />
        <div className="mt-[416px] h-[24px] bg-[#999]" />
        <div className="mt-[140px] flex-1 bg-[#56548b]" />
      </div>
      <div className="flex min-w-0 flex-1 flex-col">
        <div className="h-[2px] shrink-0 bg-[#a8a8a8]"><div className="ml-[317px] h-px w-[12px] bg-[#c9a21a]" /></div>
        <div className="flex h-[24px] shrink-0 items-center rounded-tl-[4px] border-t border-white bg-gradient-to-b from-[#e3e3e3] to-[#d0d0d0] pl-[9px] pr-[10px]">
          <svg width="9" height="6" viewBox="0 0 9 6"><path d="M.5.500h8L4.500 5z" fill="#555" /></svg>
          <div className="flex-1 pl-[3px] text-center text-[13px] font-bold text-[#5a5a5a]">1</div>
          <svg width="54" height="10" viewBox="0 0 54 10"><path d="M2 5h8M24 5h8M28 1v8M46 1.500l7 7M53 1.500l-7 7" stroke="#6a6a6a" strokeWidth="2" /></svg>
        </div>
        <div className="flex h-[24px] shrink-0 items-center pl-[13px] tracking-[-0.55px]">
          <MenuItem w="w-[75px]">Composer</MenuItem>
          <MenuItem w="w-[39px]">Edit</MenuItem>
          <MenuItem w="w-[45px]">View</MenuItem>
          <MenuItem w="w-[56px]">Layout</MenuItem>
          <MenuItem w="w-[46px]">Atlas</MenuItem>
          <MenuItem w="w-[60px]">Settings</MenuItem>
        </div>
        <div className="-ml-[3px] h-[40px] shrink-0 border-b border-[#8c8c8c] bg-gradient-to-b from-[#cecece] to-[#b9b9b9] pt-px"><Toolbar /></div>
        <div className="flex h-[608px] shrink-0">
          <SideTools />
          <div className="flex shrink-0 flex-col border-l border-t border-white">
            <TopRuler />
            <div className="flex"><LeftRuler /><MapCanvas /></div>
          </div>
          <RightDock />
        </div>
        <div className="flex h-[32px] shrink-0 items-center border-b-2 border-t border-b-[#999] border-t-[#aaa] pl-[2px] pt-[2px] tracking-[-0.4px]">
          <div className="w-[106px]">x: 51.2281 mm</div>
          <div className="w-[106px]">y: 26.8821 mm</div>
          <div className="w-[107px]">page: 1</div>
          <div className="flex h-[24px] w-[98px] overflow-hidden rounded-[3px] border border-[#8c8c8c] bg-[#fcfcfc]">
            <div className="w-[72px] pl-[6px] leading-[22px] text-[#2b2b2b]">52.2%</div>
            <div className="flex flex-1 items-center justify-center border-l border-[#a6a6a6] bg-[#d0d0d0]"><svg width="9" height="6" viewBox="0 0 9 6"><path d="M.5.500h8L4.500 5.500z" fill="#555" /></svg></div>
          </div>
          <div className="pl-[7px]">1 item selected</div>
        </div>
      </div>
    </div>
  );
}
